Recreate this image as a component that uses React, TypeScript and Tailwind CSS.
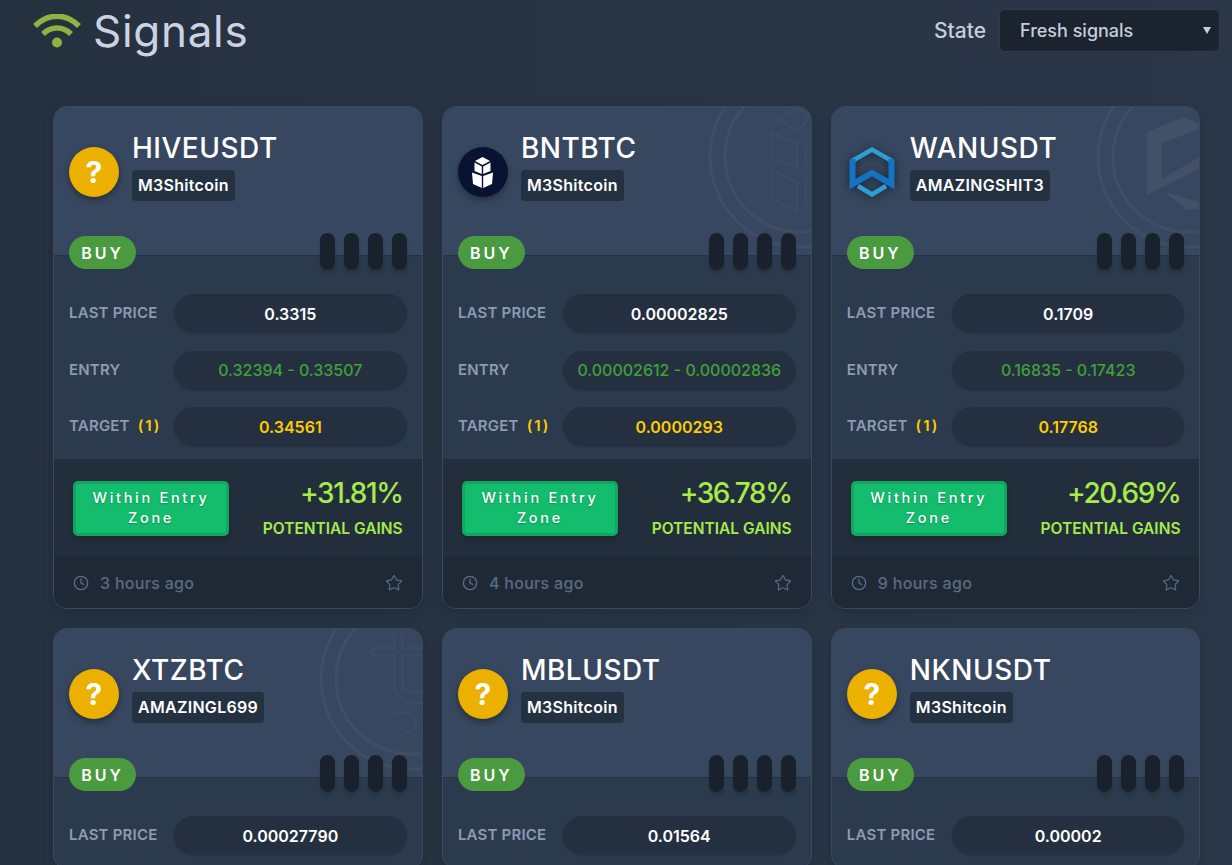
import { ReactNode } from "react";
import { Clock, Star } from "lucide-react";

type Logo = "unknown" | "bnt" | "wan";
type Mark = "bnt" | "wan" | "xtz";

interface Signal {
  pair: string;
  channel: string;
  logo: Logo;
  mark?: Mark;
  last: string;
  entry?: string;
  target?: string;
  gains?: string;
  age?: string;
}

const signals: Signal[] = [
  { pair: "HIVEUSDT", channel: "M3Shitcoin", logo: "unknown", last: "0.3315", entry: "0.32394 - 0.33507", target: "0.34561", gains: "+31.81%", age: "3 hours ago" },
  { pair: "BNTBTC", channel: "M3Shitcoin", logo: "bnt", mark: "bnt", last: "0.00002825", entry: "0.00002612 - 0.00002836", target: "0.0000293", gains: "+36.78%", age: "4 hours ago" },
  { pair: "WANUSDT", channel: "AMAZINGSHIT3", logo: "wan", mark: "wan", last: "0.1709", entry: "0.16835 - 0.17423", target: "0.17768", gains: "+20.69%", age: "9 hours ago" },
  { pair: "XTZBTC", channel: "AMAZINGL699", logo: "unknown", mark: "xtz", last: "0.00027790" },
  { pair: "MBLUSDT", channel: "M3Shitcoin", logo: "unknown", last: "0.01564" },
  { pair: "NKNUSDT", channel: "M3Shitcoin", logo: "unknown", last: "0.00002" },
];

const WifiIcon = () => (
  <svg width="48" height="35" viewBox="0 0 48 35" fill="none" stroke="#8db440" strokeWidth="5.5">
    <path d="M2 12 C15 -1 33 -1 46 12" />
    <path d="M10 20 C18 12 30 12 38 20" />
    <circle cx="24" cy="28.5" r="5" fill="#8db440" stroke="none" />
  </svg>
);

const BntLogo = () => (
  <div className="flex h-[50px] w-[50px] items-center justify-center rounded-full bg-[#0a1233] shadow-[0_3px_6px_rgba(0,0,0,0.35)]">
    <svg width="23" height="31" viewBox="0 0 23 31" fill="#fff">
      <path d="M11.5 0 L19 4 L11.5 8 L4 4 Z" />
      <path d="M3.5 5.5 L10.8 9.5 L10.8 17 L3.5 14 Z" />
      <path d="M19.5 5.5 L12.2 9.5 L12.2 17 L19.5 14 Z" />
      <path d="M1 15.5 L10.8 19 L10.8 31 L2 27 Z" />
      <path d="M22 15.5 L12.2 19 L12.2 31 L21 27 Z" />
    </svg>
  </div>
);

const WanLogo = () => (
  <div className="flex h-[50px] w-[50px] items-center justify-center">
    <svg className="drop-shadow-[0_1px_4px_rgba(0,0,0,0.5)]" width="46" height="50" viewBox="0 0 46 50" fill="none">
      <path d="M3 14 L23 2.5 L43 14" stroke="#2f9fd2" strokeWidth="4.5" />
      <path d="M9 39 L23 47.5 L37 39" stroke="#2f9fd2" strokeWidth="4.5" />
      <path d="M3.5 12 V37 L23 26 L42.5 37 V12" stroke="#1573c4" strokeWidth="6" />
    </svg>
  </div>
);

const CoinLogo = ({ logo }: { logo: Logo }) => {
  if (logo === "bnt") return <BntLogo />;
  if (logo === "wan") return <WanLogo />;
  return (
    <div className="flex h-[50px] w-[50px] items-center justify-center rounded-full bg-[#ebb000] text-[30px] font-bold text-white shadow-[0_3px_6px_rgba(0,0,0,0.35)]">
      ?
    </div>
  );
};

// faint rings + coin outline behind the card header
const Watermark = ({ mark }: { mark: Mark }) => (
  <svg className="absolute top-0 right-0" width="112" height="148" viewBox="0 0 112 148" fill="none" stroke="#ffffff" strokeOpacity="0.045" strokeWidth="2">
    <circle cx="101" cy="50" r="90" strokeWidth="3" />
    <circle cx="101" cy="50" r="75" strokeWidth="3" />
    {mark === "bnt" && (
      <g strokeWidth="1.5">
        <path d="M80 13 L96 1 L112 8 L100 24 Z" />
        <path d="M73 26 L98 36 L98 60 L73 52 Z" />
        <path d="M73 63 L98 75 L98 105 L73 92 Z" />
        <path d="M107 38 L112 34 M107 38 V60 M107 74 L112 70 M107 74 V100" />
      </g>
    )}
    {mark === "wan" && (
      <g fill="#ffffff" fillOpacity="0.06" stroke="none">
        <path d="M60 25 L97 10 L112 17 L112 22 L75 36 Z" />
        <path d="M60 25 L75 36 L75 72 L112 50 L112 62 L60 88 Z" />
        <path d="M78 85 L112 95 L112 102 L100 103 Z" />
      </g>
    )}
    {mark === "xtz" && (
      <g strokeWidth="1.5">
        <path d="M84 4 V19 H62 V26 H84 V52 C84 70 98 76 112 74" />
        <path d="M92 4 V19 H112 M92 26 H112 M92 26 V52 C92 62 100 66 112 62" />
        <path d="M78 88 C90 80 104 84 106 94 C108 102 98 106 92 100" />
      </g>
    )}
  </svg>
);

const Row = ({ label, children }: { label: ReactNode; children: ReactNode }) => (
  <div className="flex items-center">
    <div className="w-[105px] text-[15px] font-semibold tracking-[0.2px] text-[#8c9bb3]">{label}</div>
    <div className="flex h-[39px] flex-1 items-center justify-center rounded-full bg-[#243040] text-[16px] font-semibold shadow-[0_1px_2px_rgba(0,0,0,0.12)]">
      {children}
    </div>
  </div>
);

const SignalCard = ({ signal }: { signal: Signal }) => (
  <div className="overflow-hidden rounded-[14px] border border-[#3a4961] bg-[#2c3a4d] shadow-[0_4px_12px_rgba(0,0,0,0.15)]">
    <div className="relative h-[149px] border-b border-[#28333f] bg-[#37475f]">
      {signal.mark && <Watermark mark={signal.mark} />}
      <div className="relative flex items-start gap-[13px] pt-[23px] pl-[15px]">
        <div className="mt-[17px]">
          <CoinLogo logo={signal.logo} />
        </div>
        <div>
          <div className="text-[28px] leading-[36px] font-medium tracking-[0.5px] text-white">{signal.pair}</div>
          <span className="mt-[4px] inline-block rounded-[4px] bg-[#243140] px-[6px] text-[16px] leading-[31px] font-semibold tracking-[0.3px] text-white">
            {signal.channel}
          </span>
        </div>
      </div>
    </div>

    <div className="px-[15px] pb-[13px]">
      <div className="relative z-10 -mt-[23px] flex h-[37px] items-center justify-between">
        <span className="mt-[2px] flex h-[33px] w-[67px] items-center justify-center rounded-full bg-[#4a9a3f] text-[16px] font-semibold tracking-[3px] text-white">
          BUY
        </span>
        <div className="flex gap-[9px]">
          {[0, 1, 2, 3].map((bar) => (
            <span key={bar} className="h-[37px] w-[15px] rounded-full bg-[#18212c] shadow-[0_4px_3px_rgba(0,0,0,0.12)]" />
          ))}
        </div>
      </div>
      <div className="mt-[24px] flex flex-col gap-[17.5px]">
        <Row label="LAST PRICE">
          <span className="text-white">{signal.last}</span>
        </Row>
        {signal.entry && (
          <Row label="ENTRY">
            <span className="font-medium text-[#43a038]">{signal.entry}</span>
          </Row>
        )}
        {signal.target && (
          <Row
            label={
              <>
                TARGET <span className="ml-[4px] tracking-[2px] text-[#ffcc00]">(1)</span>
              </>
            }
          >
            <span className="text-[#ffcc00]">{signal.target}</span>
          </Row>
        )}
      </div>
    </div>

    {signal.gains && (
      <>
        <div className="flex h-[98px] items-center justify-between bg-[#232e3c] px-[19px]">
          <div className="flex h-[55px] w-[156px] items-center justify-center rounded-[5px] border-[3px] border-[#11a560] bg-[#13bd6d] text-center text-[14.5px] leading-[20px] font-medium tracking-[2.7px] text-white shadow-[0_3px_6px_rgba(0,0,0,0.2)] [text-shadow:0_1px_2px_rgba(0,0,0,0.3)]">
            Within Entry Zone
          </div>
          <div className="-mt-[3px] text-right">
            <div className="text-[28px] leading-[36px] font-medium tracking-[-1.4px] text-[#a6ea4c]">{signal.gains}</div>
            <div className="mt-[9px] text-[15.5px] leading-[18px] font-semibold text-[#a6ea4c]">POTENTIAL GAINS</div>
          </div>
        </div>
        <div className="flex h-[51px] items-center justify-between bg-[#1f2935] px-[19px] text-[#5b6b84]">
          <div className="flex items-center gap-[11px] text-[16px] font-medium tracking-[0.3px]">
            <Clock size={16} strokeWidth={2} />
            {signal.age}
          </div>
          <Star size={18} strokeWidth={1.6} />
        </div>
      </>
    )}
  </div>
);

export default function App() {
  return (
    <div className="h-[865px] overflow-hidden bg-linear-to-r from-[#263140] to-[#2b3748] font-['Inter',sans-serif]">
      <header className="flex h-[106px] items-start justify-between pr-[12px] pl-[33px]">
        <div className="mt-[7px] flex items-center gap-[12px]">
          <WifiIcon />
          <h1 className="text-[44px] leading-[48px] tracking-[0.7px] text-[#ccd2e2]">Signals</h1>
        </div>
        <div className="mt-[9px] flex items-center gap-[13px]">
          <span className="text-[21px] font-medium text-[#c5cede]">State</span>
          <div className="relative flex h-[43px] w-[221px] items-center rounded-[6px] border border-[#303c4c] bg-[#1b232e] pl-[20px] text-[18px] font-medium text-[#c5cede]">
            Fresh signals
            <svg className="absolute top-[17px] right-[8px]" width="8" height="7" viewBox="0 0 8 7" fill="#c5cede">
              <path d="M0 0 H8 L4 7 Z" />
            </svg>
          </div>
        </div>
      </header>
      <main className="ml-[53px] grid w-[1147.5px] grid-cols-3 gap-x-[19.3px] gap-y-[19px]">
        {signals.map((signal) => (
          <SignalCard key={signal.pair} signal={signal} />
        ))}
      </main>
    </div>
  );
}
